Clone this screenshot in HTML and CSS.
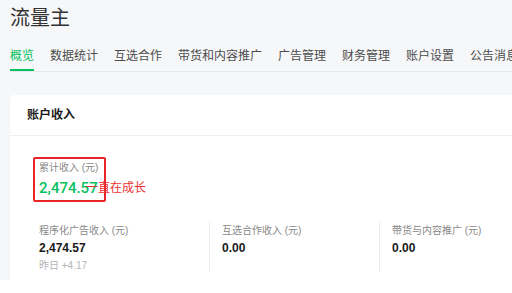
FILE: index.html
```html
<!DOCTYPE html>
<html>
<head>
  <meta charset="utf-8">
  <title>流量主</title>
  <link rel="stylesheet" href="styles.css">
</head>
<body>
  <div class="page">
    <h1 class="title">流量主</h1>
    <div class="tabs">
      <span class="tab active">概览</span>
      <span class="tab">数据统计</span>
      <span class="tab">互选合作</span>
      <span class="tab">带货和内容推广</span>
      <span class="tab">广告管理</span>
      <span class="tab">财务管理</span>
      <span class="tab">账户设置</span>
      <span class="tab">公告消息</span>
    </div>
    <div class="card">
      <div class="card-head">账户收入</div>
      <div class="card-body">
        <div class="total">
          <div class="label">累计收入 (元)</div>
          <div class="total-num">2,474.57</div>
          <div class="mark"></div>
          <div class="note">一直在成长</div>
        </div>
        <div class="stats">
          <div class="stat">
            <div class="label">程序化广告收入 (元)</div>
            <div class="value">2,474.57</div>
            <div class="sub">昨日 +4.17</div>
          </div>
          <div class="stat">
            <div class="label">互选合作收入 (元)</div>
            <div class="value">0.00</div>
          </div>
          <div class="stat">
            <div class="label">带货与内容推广 (元)</div>
            <div class="value">0.00</div>
          </div>
        </div>
      </div>
    </div>
  </div>
</body>
</html>
```

FILE: styles.css
```css
body, html {
  margin: 0;
  padding: 0;
  background-color: #fff;
  font-family: "Liberation Sans", "Noto Sans CJK SC", sans-serif;
}
.page {
  height: 280px;
  overflow: hidden;
  padding-left: 10px;
  background-color: #f6f7f9;
}
.title {
  margin: 0;
  padding-top: 8px;
  font-size: 20px;
  line-height: 20px;
  font-weight: normal;
  color: #333;
}
.tabs {
  display: flex;
  gap: 16px;
  margin-top: 20px;
  white-space: nowrap;
  border-bottom: 1px solid #e6e7ea;
}
.tab {
  flex-shrink: 0;
  font-size: 12px;
  line-height: 16px;
  padding-bottom: 5px;
  border-bottom: 2px solid transparent;
  color: #4c4c4c;
}
.tab.active {
  color: #07c160;
  border-bottom-color: #07c160;
}
.card {
  margin-top: 23px;
  margin-right: -10px;
  height: 200px;
  background-color: #fff;
  border-radius: 4px;
}
.card-head {
  height: 40px;
  line-height: 40px;
  padding-left: 17px;
  font-size: 12px;
  font-weight: bold;
  color: #1a1a1a;
  border-bottom: 1px solid #eeeff1;
}
.card-body {
  padding: 25px 0 0 29px;
}
.total {
  position: relative;
}
.label {
  font-size: 10px;
  line-height: 14px;
  color: #888;
}
.total-num {
  margin-top: 3px;
  font-family: Roboto, "Liberation Sans", sans-serif;
  font-size: 15px;
  line-height: 20px;
  font-weight: 500;
  color: #07c160;
}
.mark {
  position: absolute;
  left: -6px;
  top: -4px;
  width: 69px;
  height: 41px;
  border: 2px solid #e8262a;
  border-radius: 2px;
}
.note {
  position: absolute;
  left: 47px;
  top: 19px;
  font-size: 12px;
  line-height: 16px;
  color: #ee3030;
}
.stats {
  display: flex;
  margin-top: 24px;
}
.stat {
  box-sizing: border-box;
  flex-shrink: 0;
  width: 170px;
  height: 50px;
  padding-top: 2px;
}
.stat + .stat {
  border-left: 1px solid #eeeeee;
  padding-left: 12px;
}
.value {
  margin-top: 2px;
  font-size: 12px;
  line-height: 16px;
  font-weight: bold;
  color: #1a1a1a;
}
.sub {
  margin-top: 3px;
  font-size: 10px;
  line-height: 14px;
  color: #b5b5b5;
}
```
